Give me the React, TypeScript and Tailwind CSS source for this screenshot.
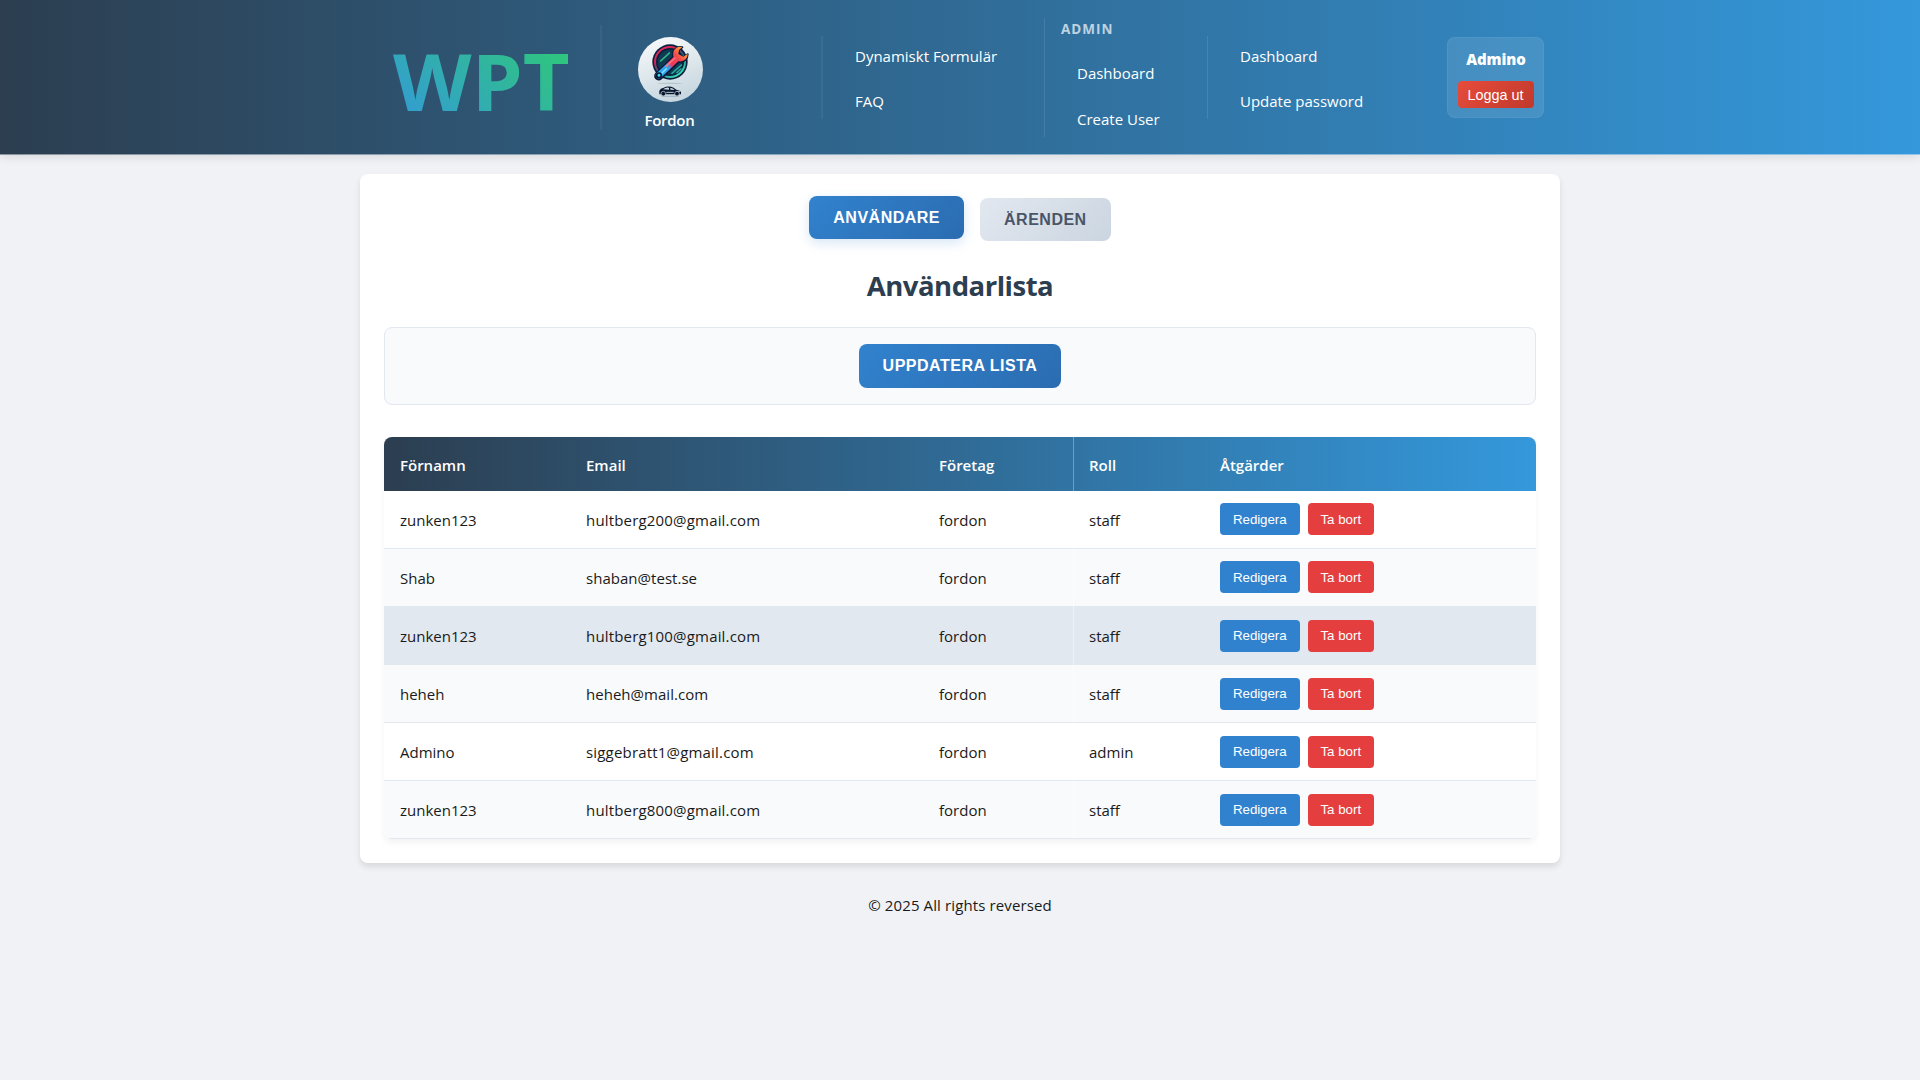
import React from 'react';

const users = [
  { name: 'zunken123', email: 'hultberg200@gmail.com', wide: true, role: 'staff', bg: 'bg-white border-[#e2e8f0]' },
  { name: 'Shab', email: 'shaban@test.se', wide: false, role: 'staff', bg: 'bg-[#f8fafc] border-[#e2e8f0]' },
  { name: 'zunken123', email: 'hultberg100@gmail.com', wide: true, role: 'staff', bg: 'bg-[#e2e8f0] border-[#e2e8f0]' },
  { name: 'heheh', email: 'heheh@mail.com', wide: false, role: 'staff', bg: 'bg-[#f8fafc] border-[#e2e8f0]' },
  { name: 'Admino', email: 'siggebratt1@gmail.com', wide: true, role: 'admin', bg: 'bg-white border-[#e2e8f0]' },
  { name: 'zunken123', email: 'hultberg800@gmail.com', wide: true, role: 'staff', bg: 'bg-[#f8fafc] border-[#e2e8f0]' },
];

const arial = "font-['Liberation_Sans',Arial,sans-serif]";
const cols = 'grid grid-cols-[186px_353px_150px_131px_1fr]';

function FordonIcon() {
  return (
    <svg className="block size-[65px] shrink-0" viewBox="53 36 195 195">
      <defs>
        <linearGradient id="disc" x1="0" y1="0" x2="0.35" y2="1">
          <stop offset="0" stopColor="#fbfcfd" />
          <stop offset="0.5" stopColor="#e2eaee" />
          <stop offset="1" stopColor="#c9d8e0" />
        </linearGradient>
        <linearGradient id="ring" x1="0" y1="0" x2="0.7" y2="1">
          <stop offset="0" stopColor="#e8325c" />
          <stop offset="0.35" stopColor="#d02455" />
          <stop offset="0.6" stopColor="#1b5d78" />
          <stop offset="1" stopColor="#35e0b4" />
        </linearGradient>
        <linearGradient id="tool" gradientUnits="userSpaceOnUse" x1="112" y1="156" x2="192" y2="76">
          <stop offset="0" stopColor="#2bb4f4" />
          <stop offset="0.38" stopColor="#3a9be8" />
          <stop offset="0.5" stopColor="#f0365e" />
          <stop offset="0.75" stopColor="#f5484c" />
          <stop offset="1" stopColor="#ffa53a" />
        </linearGradient>
      </defs>
      <circle cx="150.500" cy="133.500" r="97.500" fill="url(#disc)" />
      <circle cx="149" cy="111" r="53" fill="#0b1f3f" />
      <circle cx="149" cy="111" r="45" fill="none" stroke="url(#ring)" strokeWidth="6" />
      <circle cx="149" cy="111" r="37" fill="#0e3b52" />
      <path d="M121 108l26-24" stroke="#35b98e" strokeWidth="5" strokeLinecap="round" />
      <path d="M155 145l28-25M170 143l12-11" stroke="#2ba59b" strokeWidth="5" strokeLinecap="round" />
      <g strokeLinecap="round" strokeLinejoin="round">
        <path d="M115 153L167 103" stroke="#0b1736" strokeWidth="27" />
        <path d="M186 67A22 22 0 1 0 202 88L189 97L174 88L176 75Z" fill="#0b1736" stroke="#0b1736" strokeWidth="6" />
        <path d="M116 151L168 101" stroke="url(#tool)" strokeWidth="19" />
        <path d="M186 66A22 22 0 1 0 202 86L189 95L174 87L176 75Z" fill="url(#tool)" />
        <path d="M136 125L164 99" stroke="#ff7a86" strokeWidth="4" />
        <path d="M122 147L138 131" stroke="#7ee6ff" strokeWidth="4" />
        <circle cx="116" cy="151" r="7" fill="#38e0e8" stroke="#0b1736" strokeWidth="5" />
      </g>
      <ellipse cx="149" cy="175" rx="39" ry="1.500" fill="#aebdc6" />
      <path d="M117 207V197Q120 190 130 188Q145 181 160 188L168 194Q181 196 182 202V208H117Z" fill="#07152d" />
      <path d="M128 193Q137 186 146 188V194ZM150 188Q158 189 163 195L150 194Z" fill="#c9d6df" />
      <path d="M138 202H160M171 199h8" stroke="#e3eaef" strokeWidth="2.500" />
      <circle cx="129" cy="206" r="7" fill="#07152d" stroke="#d7e1e7" strokeWidth="2" />
      <circle cx="170" cy="206" r="7" fill="#07152d" stroke="#d7e1e7" strokeWidth="2" />
      <path d="M124 214H176" stroke="#8ba0af" strokeWidth="2" />
    </svg>
  );
}

function Header() {
  return (
    <header className="h-[155px] bg-[linear-gradient(90deg,#2c3e50,#3498db)] text-white shadow-[0_2px_10px_rgba(0,0,0,0.1),inset_0_-1px_0_rgba(255,255,255,0.45)]">
      <div className="mx-auto flex w-[1200px] text-[15px] leading-6">
        <div className="mt-[25px] flex h-[105px] w-[242px] border-r-2 border-white/5 pl-8">
          <div className="h-[105px] w-[170px] origin-left scale-x-[1.037] bg-[linear-gradient(45deg,#3498db,#2ecc71)] bg-clip-text pt-[3px] pl-px text-[78.400px] leading-[105px] font-bold text-transparent">
            WPT
          </div>
        </div>
        <div className="mt-9 flex h-[83px] w-[221px] border-r-2 border-white/5 pl-[35px]">
          <div className="flex w-[66px] flex-col items-center pt-px">
            <FordonIcon />
            <span className="mt-1.5 -ml-px font-semibold tracking-[-0.300px]">Fordon</span>
          </div>
        </div>
        <nav className="mt-9 flex w-[221px] flex-col gap-[21px] pt-2 pl-8">
          <a>Dynamiskt Formulär</a>
          <a>FAQ</a>
        </nav>
        <nav className="mt-[18px] flex h-[119px] w-[163px] flex-col border-l border-white/10 pl-4">
          <span className="text-[13.500px] leading-[22px] font-bold tracking-[1px] text-white/70">ADMIN</span>
          <a className="mt-[21px] ml-4">Dashboard</a>
          <a className="mt-[22px] ml-4">Create User</a>
        </nav>
        <nav className="mt-9 flex h-[83px] w-[240px] flex-col gap-[21px] border-l border-white/10 pt-2 pl-8">
          <a>Dashboard</a>
          <a>Update password</a>
        </nav>
        <div className="mt-[37px] flex h-[81px] w-[97px] flex-col items-center rounded-lg border border-white/5 bg-white/10 pt-[9px]">
          <span className="pl-px font-extrabold tracking-[-0.100px]">Admino</span>
          <button className={`${arial} mt-[10px] h-[27px] w-[76px] rounded bg-[linear-gradient(135deg,#e74c3c,#c0392b)] text-[14.400px] leading-[28px]`}>Logga ut</button>
        </div>
      </div>
    </header>
  );
}

function UserTable() {
  return (
    <div className="mt-8 overflow-hidden rounded-lg shadow-[0_4px_6px_rgba(0,0,0,0.05)]">
      <div className={`${cols} h-[53.600px] bg-[linear-gradient(90deg,#2c3e50,#3498db)] pl-4 text-[15px] leading-[56px] font-semibold text-white`}>
        <span>Förnamn</span>
        <span>Email</span>
        <span className="mr-[15px] border-r border-white/30">Företag</span>
        <span>Roll</span>
        <span>Åtgärder</span>
      </div>
      {users.map((u, i) => (
        <div key={i} className={`${cols} ${u.bg} h-[58.100px] border-b pl-4 text-[15px] leading-[59.400px] text-[#1a1a1a]`}>
          <span>{u.name}</span>
          <span className={u.wide ? 'tracking-[0.180px]' : 'tracking-[0.030px]'}>{u.email}</span>
          <span className="mr-[15px] border-r border-white/40">fordon</span>
          <span>{u.role}</span>
          <span className={`${arial} flex gap-2 pt-[12.800px] text-[13.333px] leading-[31px] text-white`}>
            <button className="h-8 w-[79.500px] rounded bg-[#3182ce] tracking-[-0.080px]">Redigera</button>
            <button className="h-8 w-[66.500px] rounded bg-[#e53e3e]">Ta bort</button>
          </span>
        </div>
      ))}
    </div>
  );
}

export default function App() {
  return (
    <div className="min-h-[1080px] bg-[#f0f2f5] font-['Open_Sans',sans-serif] text-[#1a1a1a]">
      <Header />
      <main className="mx-auto mt-[19.400px] h-[688.600px] w-[1200px] rounded-lg bg-white px-6 pt-[22px] shadow-[0_4px_6px_rgba(0,0,0,0.1)]">
        <div className={`${arial} flex justify-center gap-4 text-base font-bold tracking-[0.5px]`}>
          <button className="h-[43px] rounded-lg bg-[linear-gradient(135deg,#3182ce,#2b6cb0)] px-6 leading-[43px] text-white shadow-[0_4px_12px_rgba(49,130,206,0.2)]">ANVÄNDARE</button>
          <button className="mt-[2px] h-[43px] rounded-lg bg-[linear-gradient(135deg,#e2e8f0,#cbd5e0)] px-6 leading-[43px] text-[#4a5568]">ÄRENDEN</button>
        </div>
        <h1 className="mt-6 text-center text-[27.500px] leading-[41px] font-bold tracking-[-0.500px] text-[#2c3e50]">Användarlista</h1>
        <div className="mt-[20.600px] flex h-[78px] items-center justify-center rounded-lg border border-[#e2e8f0] bg-[#f8fafc]">
          <button className={`${arial} h-11 rounded-lg bg-[linear-gradient(135deg,#3182ce,#2b6cb0)] px-6 text-base leading-[44px] font-bold tracking-[0.5px] text-white`}>UPPDATERA LISTA</button>
        </div>
        <UserTable />
      </main>
      <footer className="mt-[30px] text-center text-[15px] leading-6 tracking-[0.120px]">© 2025 All rights reversed</footer>
    </div>
  );
}
